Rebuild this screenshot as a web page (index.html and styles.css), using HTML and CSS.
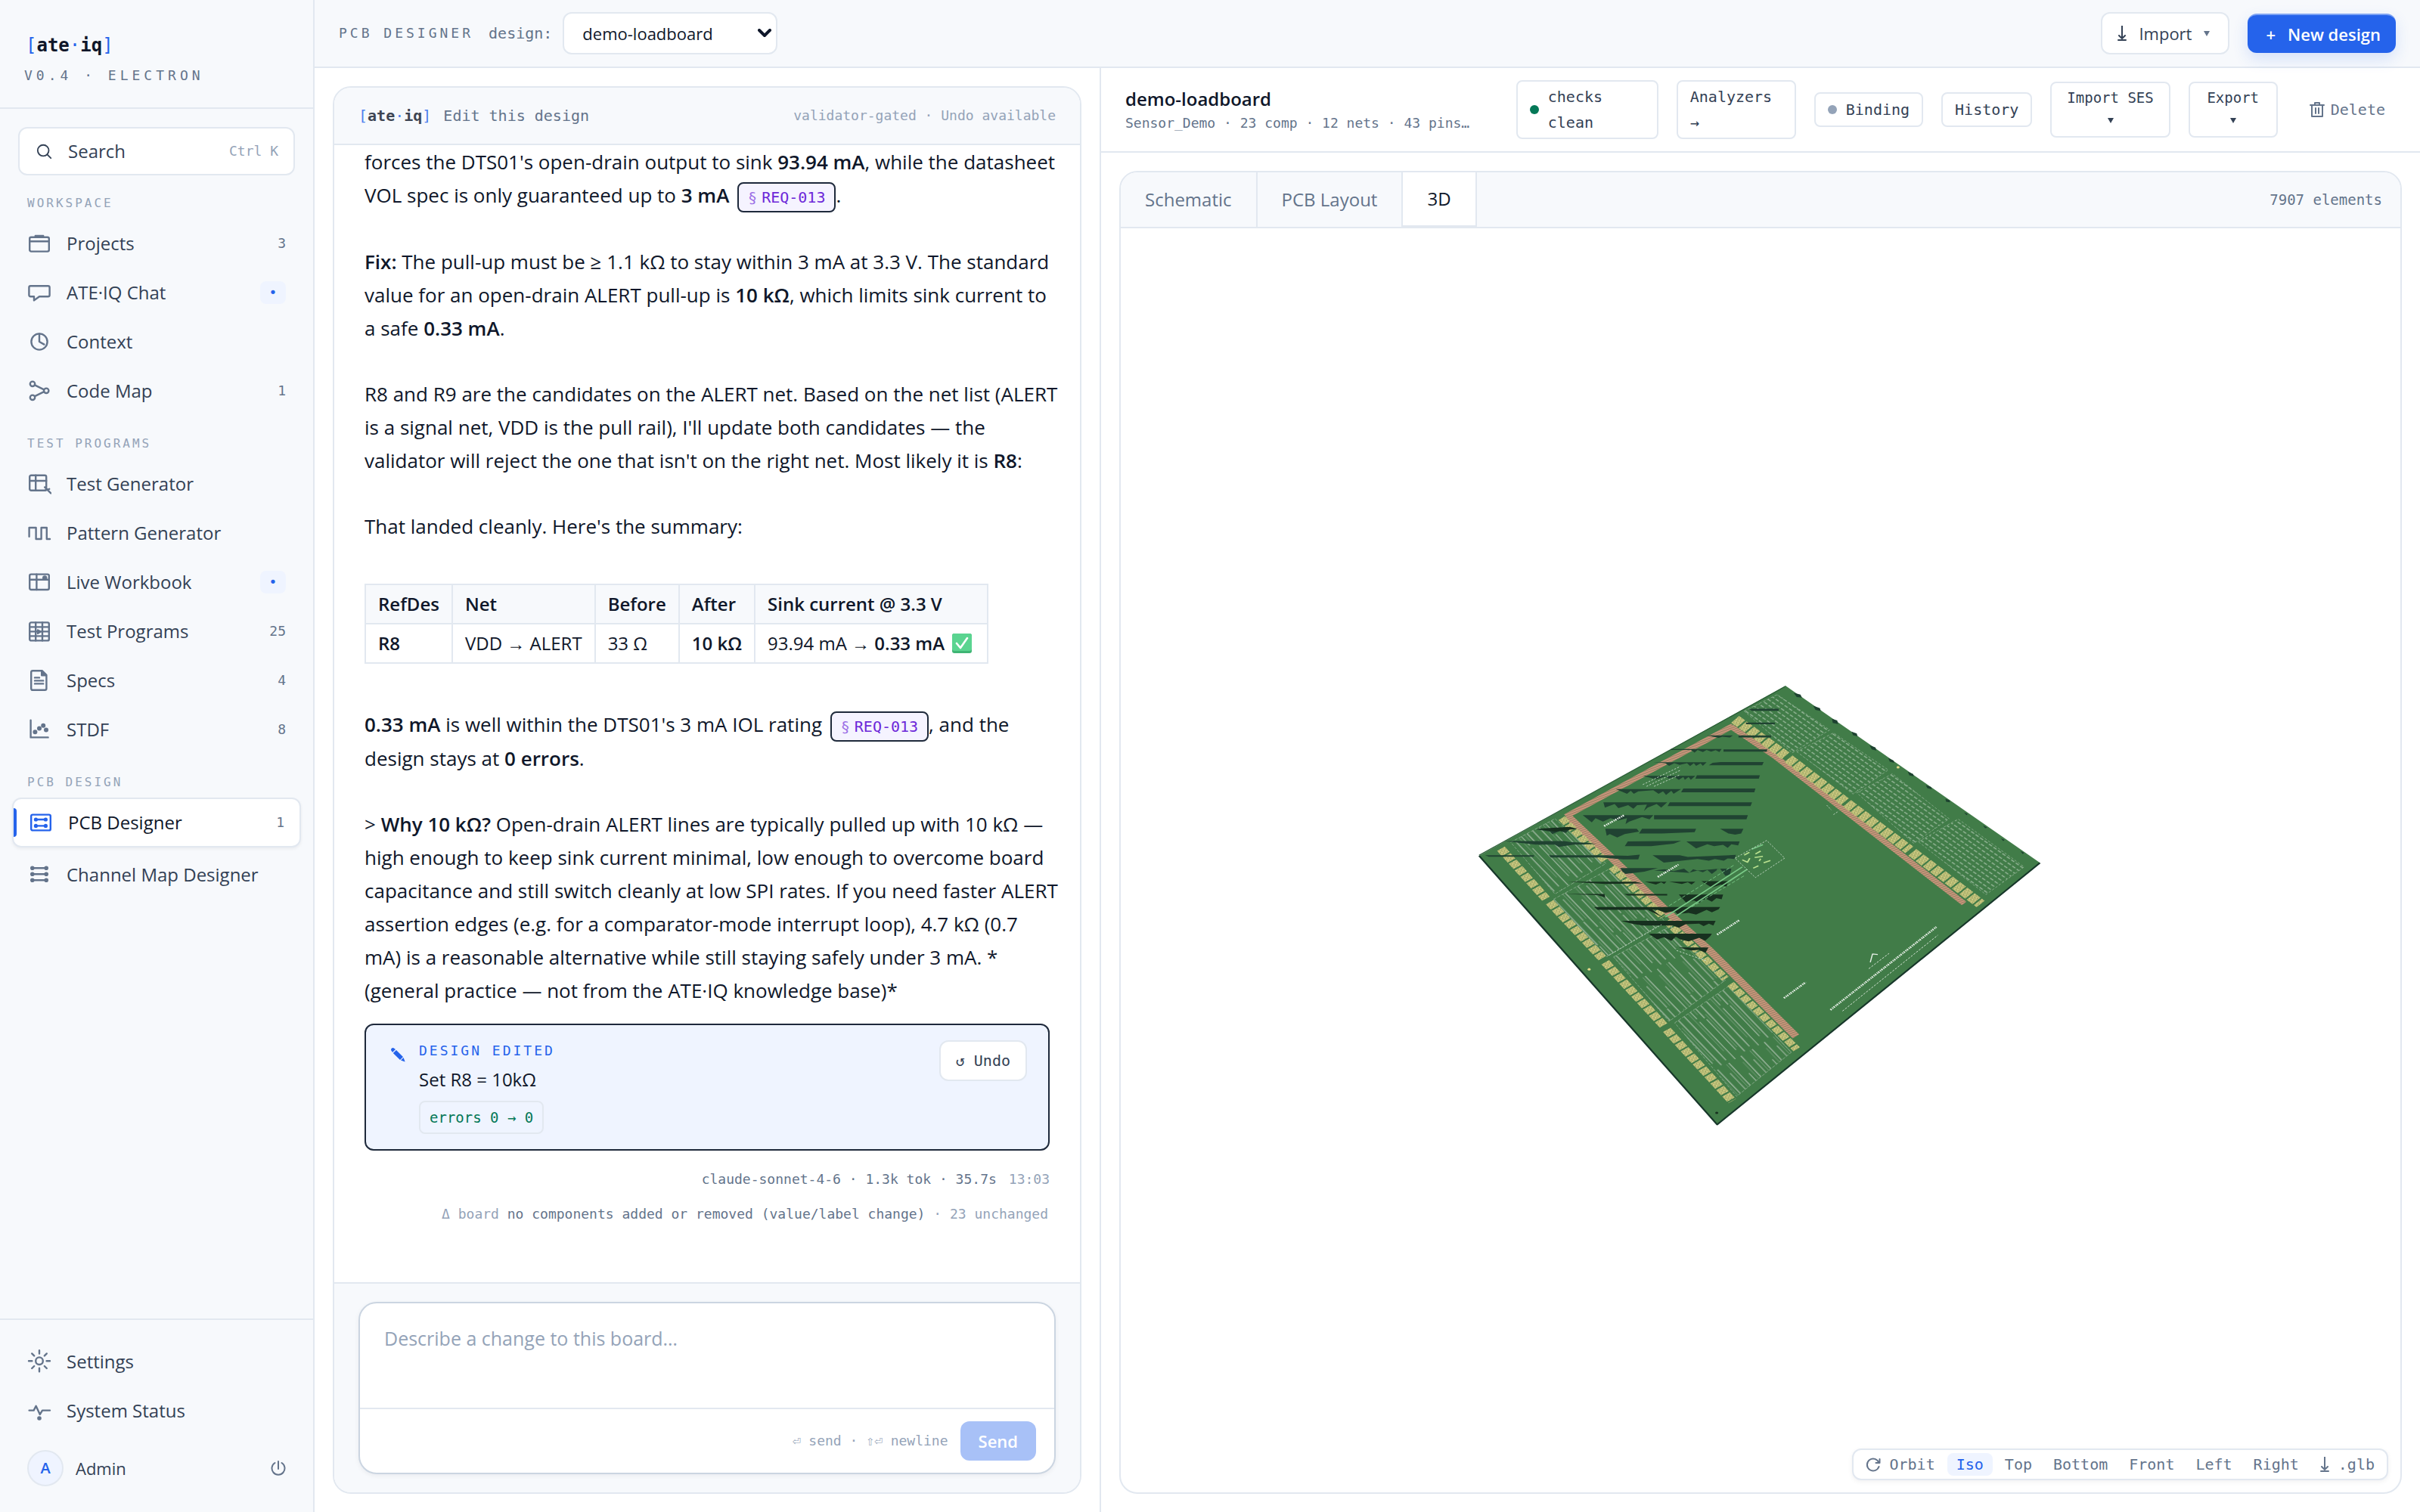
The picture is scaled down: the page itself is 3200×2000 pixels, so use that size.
FILE: index.html
```html
<!DOCTYPE html>
<html lang="en">
<head>
<meta charset="utf-8">
<title>ATE·IQ — PCB Designer</title>
<link rel="stylesheet" href="styles.css">
</head>
<body>
<div class="app">
  <aside class="sidebar">
    <header class="brand">
      <div class="logo"><i>[</i>ate<i>·</i>iq<i>]</i></div>
      <div class="version">V0.4 · ELECTRON</div>
    </header>
    <nav class="nav" aria-label="Main">
      <button class="search" type="button">
        <svg class="search-icon" viewBox="0 0 24 24"><circle cx="10" cy="11" r="8"/><path d="M16 17l5 5"/></svg>
        <span>Search</span><kbd>Ctrl K</kbd>
      </button>
      <h2 class="nav-label">WORKSPACE</h2>
      <a class="nav-item" href="#projects"><svg class="icon" viewBox="0 0 16 16"><rect x="1.6" y="3.9" width="12.8" height="9.4" rx="1"/><path d="M1.6 6.6h12.8M5.4 3.6V3h5.2v.6"/></svg><span>Projects</span><b class="count">3</b></a>
      <a class="nav-item" href="#chat"><svg class="icon" viewBox="0 0 16 16"><path d="M2.2 3.6h11.6q1 0 1 1v5q0 1-1 1H8l-3.5 2.6v-2.6H2.2q-1 0-1-1v-5q0-1 1-1z"/></svg><span>ATE·IQ Chat</span><b class="badge">•</b></a>
      <a class="nav-item" href="#context"><svg class="icon" viewBox="0 0 16 16"><circle cx="8" cy="8" r="5.3"/><path d="M8 2.8V8l3.2 1.8"/></svg><span>Context</span></a>
      <a class="nav-item" href="#codemap"><svg class="icon" viewBox="0 0 16 16"><circle cx="3.5" cy="3.4" r="1.6"/><circle cx="3.5" cy="12.4" r="1.6"/><circle cx="12.6" cy="7.9" r="1.6"/><path d="M5 4.2l6.1 3M5 11.6l6.1-3"/></svg><span>Code Map</span><b class="count">1</b></a>
      <h2 class="nav-label">TEST PROGRAMS</h2>
      <a class="nav-item" href="#testgen"><svg class="icon" viewBox="0 0 16 16"><rect x="1.6" y="2.4" width="11" height="10" rx="1"/><path d="M1.6 6h11M5.6 2.4v10M11.6 10.2l4 4M12.2 12.2l2.4-.8"/></svg><span>Test Generator</span></a>
      <a class="nav-item" href="#patterngen"><svg class="icon" viewBox="0 0 16 16"><path d="M1.3 10.4V4.5h4.5V12h3.5V4.5h3.6V12H15"/></svg><span>Pattern Generator</span></a>
      <a class="nav-item" href="#workbook"><svg class="icon" viewBox="0 0 16 16"><rect x="1.6" y="2.8" width="12.8" height="10.2" rx="1"/><path d="M1.6 6.4h12.8M6.2 2.8V13"/><circle class="solid" cx="11.6" cy="5.2" r="1"/></svg><span>Live Workbook</span><b class="badge">•</b></a>
      <a class="nav-item" href="#programs"><svg class="icon" viewBox="0 0 16 16"><rect x="1.6" y="2.2" width="12.8" height="12" rx="1"/><path d="M1.6 5.2h12.8M1.6 8.2h12.8M1.6 11.2h12.8M5.6 2.2v12M10 2.2v12"/><path class="solid" d="M7 7.2l1.8 1.1L7 9.4z"/></svg><span>Test Programs</span><b class="count">25</b></a>
      <a class="nav-item" href="#specs"><svg class="icon" viewBox="0 0 16 16"><path d="M3.6 1.6h6.2l2.9 2.8v9q0 1-1 1H3.6q-1 0-1-1V2.6q0-1 1-1z"/><path class="solid" d="M9.6 1.8v2.8h2.8z"/><path d="M5 6.2h3M5 8.2h5.6M5 10.2h5.6"/></svg><span>Specs</span><b class="count">4</b></a>
      <a class="nav-item" href="#stdf"><svg class="icon" viewBox="0 0 16 16"><path d="M2.3 1.8v11.4h11.5"/><circle class="solid" cx="5.2" cy="9.6" r=".9"/><circle class="solid" cx="8" cy="7.2" r=".9"/><circle class="solid" cx="10.6" cy="5.4" r=".9"/><circle class="solid" cx="12.5" cy="8.2" r=".9"/></svg><span>STDF</span><b class="count">8</b></a>
      <h2 class="nav-label">PCB DESIGN</h2>
      <a class="nav-item active" href="#pcb" aria-current="page"><svg class="icon" viewBox="0 0 16 16"><rect x="1.6" y="2.8" width="12.8" height="10.4" rx="1"/><path d="M4.6 6h6.6M4.6 10.2h6.6"/><circle class="solid" cx="4.7" cy="6" r=".7"/><circle class="solid" cx="11.2" cy="6" r=".7"/><circle class="solid" cx="4.7" cy="10.2" r=".7"/><circle class="solid" cx="11.2" cy="10.2" r=".7"/></svg><span>PCB Designer</span><b class="count">1</b></a>
      <a class="nav-item" href="#channels"><svg class="icon" viewBox="0 0 16 16"><path d="M3.4 3.6h9.2M3.4 7.6h9.2M3.4 11.6h9.2"/><circle class="solid" cx="3.4" cy="3.6" r=".8"/><circle class="solid" cx="3.4" cy="7.6" r=".8"/><circle class="solid" cx="3.4" cy="11.6" r=".8"/><circle class="solid" cx="12.6" cy="3.6" r=".8"/><circle class="solid" cx="12.6" cy="7.6" r=".8"/><circle class="solid" cx="12.6" cy="11.6" r=".8"/></svg><span>Channel Map Designer</span></a>
    </nav>
    <footer class="side-foot">
      <a class="nav-item" href="#settings"><svg class="icon" viewBox="0 0 16 16"><circle cx="8" cy="7.6" r="2.4"/><path d="M8 .6v2.2M8 12.4v2.2M1 7.6h2.2M12.8 7.6H15M3.1 2.7l1.5 1.5M11.4 11l1.5 1.5M12.9 2.7l-1.5 1.5M4.6 11l-1.5 1.5"/></svg><span>Settings</span></a>
      <a class="nav-item" href="#status"><svg class="icon" viewBox="0 0 16 16"><path d="M1.3 7.8h3l1.5-2.9 2.6 5.6 1.600-2.700h5"/><circle class="solid" cx="8" cy="13" r=".8"/></svg><span>System Status</span></a>
      <div class="user"><span class="avatar">A</span><span>Admin</span>
        <button class="power" type="button" aria-label="Sign out"><svg viewBox="0 0 20 20"><path d="M10 1v10M5.500 3a8.500 8.500 0 1 0 9 0"/></svg></button></div>
    </footer>
  </aside>

  <main class="main">
    <header class="topbar">
      <h1 class="crumb">PCB DESIGNER</h1>
      <label class="design-label" for="design">design:</label>
      <div class="select-wrap">
        <select id="design"><option>demo-loadboard</option></select>
        <svg class="chevron" viewBox="0 0 18 12"><path d="M2 2l7 7 7-7"/></svg>
      </div>
      <div class="top-actions">
        <button class="btn-import" type="button"><svg class="down" viewBox="0 0 12 20"><path d="M6 0v17M2 13l4 4 4-4M1 19h10"/></svg>Import<span class="tri small"></span></button>
        <button class="btn-new" type="button"><span>+</span>New design</button>
      </div>
    </header>

    <div class="workspace">
      <div class="chat-col">
        <section class="panel chat">
          <header class="chat-head">
            <div class="logo mini"><i>[</i>ate<i>·</i>iq<i>]</i></div>
            <span class="chat-title">Edit this design</span>
            <span class="chat-note">validator-gated · Undo available</span>
          </header>
          <div class="messages">
            <p>forces the DTS01's open-drain output to sink <b>93.94 mA</b>, while the datasheet<br>VOL spec is only guaranteed up to <b>3 mA</b> <a class="req" href="#req-013"><i>§</i>REQ-013</a>.</p>
            <p><b>Fix:</b> The pull-up must be ≥ 1.1 kΩ to stay within 3 mA at 3.3 V. The standard<br>value for an open-drain ALERT pull-up is <b>10 kΩ</b>, which limits sink current to<br>a safe <b>0.33 mA</b>.</p>
            <p>R8 and R9 are the candidates on the ALERT net. Based on the net list (ALERT<br>is a signal net, VDD is the pull rail), I'll update both candidates — the<br>validator will reject the one that isn't on the right net. Most likely it is <b>R8</b>:</p>
            <p>That landed cleanly. Here's the summary:</p>
            <table class="summary">
              <thead><tr><th>RefDes</th><th>Net</th><th>Before</th><th>After</th><th>Sink current @ 3.3 V</th></tr></thead>
              <tbody><tr><td><b>R8</b></td><td>VDD → ALERT</td><td>33 Ω</td><td><b>10 kΩ</b></td><td>93.94 mA → <b>0.33 mA</b> <svg class="tick" viewBox="0 0 26 26" role="img" aria-label="passed"><rect width="26" height="26" rx="3" fill="#3fb574"/><rect width="26" height="23" rx="3" fill="#5ad490"/><path d="M6 13l5 6 9-13" fill="none" stroke="#fff" stroke-width="2.6" stroke-linecap="round" stroke-linejoin="round"/></svg></td></tr></tbody>
            </table>
            <p><b>0.33 mA</b> is well within the DTS01's 3 mA IOL rating <a class="req" href="#req-013"><i>§</i>REQ-013</a>, and the<br>design stays at <b>0 errors</b>.</p>
            <p class="last">&gt; <b>Why 10 kΩ?</b> Open-drain ALERT lines are typically pulled up with 10 kΩ —<br>high enough to keep sink current minimal, low enough to overcome board<br>capacitance and still switch cleanly at low SPI rates. If you need faster ALERT<br>assertion edges (e.g. for a comparator-mode interrupt loop), 4.7 kΩ (0.7<br>mA) is a reasonable alternative while still staying safely under 3 mA. *<br>(general practice — not from the ATE·IQ knowledge base)*</p>
            <article class="edit-card">
              <svg class="pencil" viewBox="0 0 20 20"><path d="M1 4Q1 1 4 1l3 2-4 4zM3.800 8L8 4l9 9-4 4zM14 17.600l3.600-3.600L19.600 19.600z"/></svg>
              <div class="edit-body">
                <div class="edit-kind">DESIGN EDITED</div>
                <div class="edit-text">Set R8 = 10kΩ</div>
                <div class="edit-errors">errors 0 → 0</div>
              </div>
              <button class="btn-undo" type="button">↺ Undo</button>
            </article>
            <div class="meta"><span>claude-sonnet-4-6 · 1.3k tok · 35.7s</span><time>13:03</time></div>
            <div class="delta">Δ board <span>no components added or removed (value/label change)</span> · 23 unchanged</div>
          </div>
          <footer class="composer">
            <form class="compose-box">
              <textarea aria-label="Message" placeholder="Describe a change to this board…"></textarea>
              <div class="compose-foot"><span>⏎ send · ⇧⏎ newline</span><button class="btn-send" type="button">Send</button></div>
            </form>
          </footer>
        </section>
      </div>

      <div class="board-col">
        <header class="board-head">
          <div class="board-title"><h2>demo-loadboard</h2><p>Sensor_Demo · 23 comp · 12 nets · 43 pins…</p></div>
          <div class="board-actions">
            <button class="tool checks" type="button"><span class="dot ok"></span><span>checks<br>clean</span></button>
            <button class="tool analyzers" type="button">Analyzers<br>→</button>
            <button class="tool" type="button"><span class="dot"></span>Binding</button>
            <button class="tool" type="button">History</button>
            <button class="tool menu" type="button">Import SES<span class="tri"></span></button>
            <button class="tool menu" type="button">Export<span class="tri"></span></button>
            <button class="tool delete" type="button"><svg class="trash" viewBox="0 0 20 22"><path d="M1 5h18M7 5V2h6v3M3 5v15h14V5M8 9v7M12 9v7"/></svg>Delete</button>
          </div>
        </header>
        <section class="panel viewer">
          <header class="tabs">
            <button class="tab" type="button">Schematic</button>
            <button class="tab" type="button">PCB Layout</button>
            <button class="tab on" type="button">3D</button>
            <span class="elements">7907 elements</span>
          </header>
          <div class="stage">
            <svg class="pcb" viewBox="0 0 1568 1568" preserveAspectRatio="none" role="img" aria-label="3D board view">
              <defs>
                <pattern id="silkR" width="16" height="14" patternUnits="userSpaceOnUse" patternTransform="rotate(42)"><path d="M0 5h11" stroke="#9dbb9f" stroke-width="3"/></pattern>
                <pattern id="silkL" width="370" height="78" patternUnits="userSpaceOnUse" patternTransform="rotate(53)"><path d="M0 6h160M168 6h190M30 24h90M124 26h240M0 44h210M216 42h130M60 62h140M212 62h158" stroke="#9bb59d" stroke-width="3"/><path d="M0 14h120M200 34h140M20 52h170M150 70h180" stroke="#6f9a74" stroke-width="2"/></pattern>
                <pattern id="pads" width="8" height="9" patternUnits="userSpaceOnUse" patternTransform="rotate(20)"><rect width="8" height="9" fill="#a9b068"/><path d="M0 2h5M3 6h5" stroke="#e9de96" stroke-width="3"/><path d="M6 3v3" stroke="#5d7a45" stroke-width="2"/></pattern>
                <pattern id="copper" width="9" height="7" patternUnits="userSpaceOnUse" patternTransform="rotate(-25)"><rect width="9" height="7" fill="#9a8564"/><path d="M0 3h9" stroke="#dd9a86" stroke-width="3"/></pattern>
              </defs>
              <path d="M850 44L1528 646 668 1536 34 622z" fill="#417c48"/>
              <path d="M34 622L668 1536 1528 646" fill="none" stroke="#17372a" stroke-width="5"/>
              <path d="M850 46L34 620" stroke="#2b5c37" stroke-width="3"/>
              <path d="M872 68l18 6 4 10-14-2zM924 112l18 8 2 10-14-4zM974 156l14 6 2 12-14-4zM1026 200l14 6 2 10-12-4zM1074 246l16 8 2 10-12-4zM1124 290l14 8 2 8-12-4zM1176 336l14 8 2 8-12-4zM1224 382l14 6 2 8-12-4zM1276 428l12 6 0 6-10-2zM1326 474l10 6-4 4zM1376 518l12 8-6 2zM1424 562l10 6-4 4zM1476 606l10 6-4 4z" fill="#1d4230"/>
              <g fill="url(#silkR)" stroke="#86aa89" stroke-width="2" stroke-dasharray="7 5">
                <path d="M740 130L828 74 968 194 868 272z"/><path d="M880 268L978 204 1124 330 1030 412z"/><path d="M1040 408L1135 343 1286 496 1192 580z"/><path d="M1204 574L1310 497 1486 660 1384 754z"/>
              </g>
              <g fill="url(#silkL)" stroke="#86aa89" stroke-width="2" stroke-dasharray="9 4">
                <path d="M118 576L236 496 372 648 236 752z"/><path d="M232 770L385 664 530 846 374 965z"/><path d="M392 966L545 860 690 1045 540 1185z"/><path d="M555 1190L698 1066 866 1290 720 1440z"/>
              </g>
              <g fill="none" stroke="url(#copper)"><path d="M710 180L265 488" stroke-width="17"/><path d="M704 182L820 282 1326 784" stroke-width="17"/><path d="M270 488L386 628 545 824 650 946 878 1236" stroke-width="22"/></g>
              <g fill="none" stroke="url(#pads)" stroke-width="31" stroke-dasharray="22 5">
                <path d="M716 158L850 282M858 292L1008 438M1014 444L1180 602M1188 610L1370 786"/>
                <path stroke-width="22" d="M254 494L372 642M388 660L524 830M534 844L690 1040M704 1058L880 1280"/>
                <path stroke-width="25" d="M92 598L212 768M222 780L362 970M370 984L526 1200M534 1214L708 1456"/>
              </g>
              <g fill="#204332">
                <path d="M752 122h80v7h-72zM745 169h77v6h-77zM725 213h87v7h-87zM640 213h70l-8 7-20-3-10 4zM685 260h117l-2 8H685zM545 259h135l-6 10-10-6-12 5-12-6-10 7-14-7-8 9-10-9H545zM678 303h114l-4 11H646l10-8zM498 304h142l-10 12-6-8-12 8-6-9-10 10-8-10-20 6-14-6-14 9-10-9zM614 348h168l-3 12H610zM470 350h140l-12 14-6-10-10 10-4-10-12 10-12-10-14 6-10-8-24 10z"/>
                <path d="M578 393h192l-3 13H572zM398 395h174l-20 16-6-10-14 14-8-12-12 8-14-12-40 4-12 8-8-10-10 10zM542 440h219l-4 13H536zM365 440h170l-16 18-12-12-24 12-10 12 8-22-26 2-10 12-14-12-26 10-10-14-26 12zM500 484h250l-4 14H500zM310 484h188l-10 14-20-8-34 16-10 8 4-20-24 8-20-8-20 12-20-12-10 14zM468 530h144l-4 12-88 4h-60zM676 530h62l-6 16-16 4-18-4zM370 530h84l6 10-38 8-20 12-20-12-8 6zM185 532h90l-10 12-16-6-20 10-6-8z"/>
                <path d="M430 573l142-2-20 10-60 8h-70zM586 573h142l-4 14-18-4-10 12-12-10-24 4-18-6-30 14zM100 572h160l20 4 46 2 20 4-60 2-40 8-10-8h-50zM50 620h130v5H60zM220 620h150l60 2 32-4-4 16-40 0-60-6H225zM496 620h72l22 6 128-7-4 14-18-2-10 8-24-6-16 6-30-6-90 12zM410 664l100 0-36 12-50 8-8-8zM500 672l28-4 24 6 28-8 14 14 10-12 26 10 12-8 12 14 14-14-4-4h42l-4 20-12 4-14-24-60 6-24 8z"/>
              </g>
              <g fill="#17301f">
                <path d="M270 710h180l20 6-100 2zM475 710h58l-6 8-8-6-14 8zM540 710h70l-10 10-10-8-16 6zM626 708h72l-6 20-14-8-24 10zM260 752h108l2 12-20-8zM420 752h115v5H430zM566 754h118l-4 16-14-4-12 12-16-10-18 14-14-8-20 8zM340 796h336l-4 8-18 10-14-8-28 16-20-6-30 4-8-10-24 6-20-10H350zM412 843h252l-6 16-12-6-14 8-12-8-36 2-18 12-16-8-80 0-30-6zM486 887h168l-4 8-14 16-16-10-28 12-22-6-12-10-12 14-20-12-18 8zM565 934h80l-8 18-18-10-20 2zM186 530l90-6 20 6-60 10zM480 796l18 12 24 22-36-22z"/>
              </g>
              <g fill="none" stroke="#79c987" stroke-width="4"><path d="M530 830L735 660M560 826L748 668M760 600L790 584"/><path stroke-dasharray="10 5" stroke-width="2" d="M540 792L715 652M600 796L740 690"/></g>
              <g fill="none" stroke="#c9ddcb" stroke-width="2" stroke-dasharray="5 4"><path d="M716 630L800 570 848 630 770 696zM560 944L640 980M380 960L520 856M960 450l12 16M978 482l14-12M470 380L570 318M480 386L572 330M500 386l70-40"/></g>
              <path d="M735 636l14 8 6-14M770 616l14-10M768 628l22-4M764 664l14-8M792 646l18-8M740 620l14-10M780 640l4-8" stroke="#b9e08f" stroke-width="4" fill="none"/>
              <g fill="none" stroke="#e6efe6">
                <path stroke-width="6" stroke-dasharray="4 3 3 2" d="M367 521L420 484M510 694L565 652M668 890L727 841M846 1106L904 1052M970 1146L1252 864"/>
                <path stroke-width="2" stroke-dasharray="6 4" d="M1002 1150L1256 892M1072 1006L1126 954"/><path stroke-width="3" d="M1076 984L1082 956 1096 958"/>
              </g>
              <circle cx="1150" cy="321" r="4" fill="#e2d98b"/><circle cx="327" cy="1008" r="4" fill="#e2d98b"/><circle cx="667" cy="1496" r="4" fill="#17301f"/>
            </svg>
            <div class="view-bar" role="toolbar" aria-label="Camera">
              <button type="button"><svg class="orbit" viewBox="0 0 20 20"><path d="M17.500 8a8 8 0 1 0 0 5M18.500 3v5h-5"/></svg>Orbit</button>
              <button type="button" class="on">Iso</button>
              <button type="button">Top</button>
              <button type="button">Bottom</button>
              <button type="button">Front</button>
              <button type="button">Left</button>
              <button type="button">Right</button>
              <button type="button"><svg class="down" viewBox="0 0 12 20"><path d="M6 0v17M2 13l4 4 4-4M1 19h10"/></svg>.glb</button>
            </div>
          </div>
        </section>
      </div>
    </div>
  </main>
</div>
</body>
</html>
```
FILE: styles.css
```css
:root {
  --ink: #0f172a;
  --mid: #334155;
  --muted: #64748b;
  --faint: #94a3b8;
  --line: #e2e8f0;
  --soft: #f7f9fc;
  --accent: #2563eb;
  --accent-soft: #eff4ff;
  --sans: "Open Sans", "Noto Sans", sans-serif;
  --mono: "DejaVu Sans Mono", "Liberation Mono", monospace;
}

* { box-sizing: border-box; }
body { margin: 0; background: #fff; color: var(--ink); font: 24px/32px var(--sans); }
button, select, textarea { font: inherit; color: inherit; margin: 0; }
button { cursor: pointer; }
h1, h2, p { margin: 0; }
a { color: inherit; text-decoration: none; }
b { font-weight: 600; }
i { font-style: normal; }
svg { flex: none; fill: none; stroke: currentColor; stroke-linecap: round; stroke-linejoin: round; }

.app { display: grid; grid-template-columns: 416px minmax(0, 1fr); height: 100vh; }

/* Sidebar */
.sidebar { display: flex; flex-direction: column; background: var(--soft); border-right: 2px solid var(--line); }
.brand { height: 144px; padding: 44px 32px 0; border-bottom: 2px solid var(--line); }
.logo { padding-left: 2px; font: 700 24px/32px var(--mono); }
.logo i { color: var(--accent); font-weight: 400; }
.version { margin-top: 8px; font: 18px/32px var(--mono); letter-spacing: 5px; color: var(--muted); }
.nav { flex: 1; display: flex; flex-direction: column; padding: 24px 16px 0; }
.search { display: flex; align-items: center; gap: 20px; height: 64px; margin: 0 8px 22px; padding: 0 20px; background: #fff; border: 2px solid var(--line); border-radius: 12px; color: var(--mid); }
.search-icon { width: 22px; height: 22px; stroke-width: 2; margin-left: 2px; }
.search kbd { margin-left: auto; font: 18px/24px var(--mono); color: var(--faint); }
.nav-label { margin: 0 20px 5px; font: 16px/30px var(--mono); letter-spacing: 3px; color: var(--faint); }
.nav-item { display: flex; align-items: center; height: 65px; padding: 0 20px; color: var(--mid); }
.nav-item + .nav-label { margin-top: 23px; }
.icon { width: 32px; height: 32px; margin-right: 20px; stroke-width: 1.2; color: var(--muted); }
.solid { fill: currentColor; }
.count { margin-left: auto; font: 18px/24px var(--mono); color: var(--muted); }
.badge { margin-left: auto; width: 34px; border-radius: 8px; background: var(--accent-soft); color: var(--accent); font: 400 18px/30px var(--mono); text-align: center; }
.nav-item.active { position: relative; height: 66px; margin-bottom: 3px; background: #fff; border: 2px solid var(--line); border-radius: 12px; color: var(--ink); box-shadow: 0 2px 4px rgba(15, 23, 42, .06); }
.nav-item.active::before { content: ""; position: absolute; left: 0; top: 12px; bottom: 12px; width: 4px; border-radius: 0 4px 4px 0; background: var(--accent); }
.nav-item.active .icon { color: var(--accent); }
.side-foot { height: 256px; padding: 22px 16px 0; border-top: 2px solid var(--line); }
.user { display: flex; align-items: center; gap: 16px; padding: 20px; color: var(--mid); font-size: 22px; }
.avatar { width: 48px; border: 2px solid var(--line); border-radius: 50%; background: var(--accent-soft); color: var(--accent); font-size: 20px; font-weight: 600; line-height: 44px; text-align: center; }
.power { margin-left: auto; padding: 0; border: 0; background: none; color: var(--muted); line-height: 0; }
.power svg { width: 20px; height: 20px; stroke-width: 2; }

/* Top bar */
.main { display: flex; flex-direction: column; min-width: 0; height: 100vh; }
.topbar { display: flex; align-items: center; height: 90px; padding: 0 32px; background: var(--soft); border-bottom: 2px solid var(--line); }
.crumb { font: 18px/32px var(--mono); letter-spacing: 4px; color: var(--muted); }
.design-label { margin: 0 14px 0 20px; font: 20px/32px var(--mono); color: var(--muted); }
.select-wrap { position: relative; }
.select-wrap select { appearance: none; width: 284px; height: 56px; padding: 0 24px; border: 2px solid var(--line); border-radius: 12px; background: #fff; font-size: 22px; }
.chevron { position: absolute; right: 8px; top: 22px; width: 18px; height: 12px; stroke-width: 4; pointer-events: none; }
.top-actions { display: flex; align-items: center; gap: 24px; margin-left: auto; }
.btn-import, .btn-new { display: flex; align-items: center; font-size: 22px; font-weight: 500; border-radius: 12px; }
.btn-import { height: 56px; gap: 16px; padding: 0 24px 0 20px; border: 2px solid var(--line); background: #fff; color: var(--mid); }
.down { width: 12px; height: 20px; stroke-width: 2; }
.tri { display: block; border: 4px solid transparent; border-top: 7px solid currentColor; border-bottom: 0; }
.tri.small { color: var(--muted); }
.btn-new { height: 52px; gap: 16px; padding: 0 20px 0 24px; border: 0; border-top: 2px solid #7ea3f3; background: var(--accent); color: #fff; font-weight: 600; box-shadow: 0 8px 20px rgba(37, 99, 235, .16); }

/* Workspace */
.workspace { flex: 1; min-height: 0; display: grid; grid-template-columns: minmax(0, 65fr) minmax(0, 109fr); }
.chat-col { display: flex; min-height: 0; padding: 24px; border-right: 2px solid var(--line); }
.board-col { display: flex; flex-direction: column; min-height: 0; }
.panel { display: flex; flex-direction: column; flex: 1; min-width: 0; min-height: 0; border: 2px solid var(--line); border-radius: 24px; overflow: hidden; }

/* Chat */
.chat-head { display: flex; align-items: center; gap: 16px; height: 76px; padding: 0 32px; background: var(--soft); border-bottom: 2px solid var(--line); }
.logo.mini { padding: 0; font-size: 20px; opacity: .8; }
.chat-title { font: 20px/32px var(--mono); color: var(--muted); }
.chat-note { margin-left: auto; font: 18px/32px var(--mono); color: var(--faint); }
.messages { flex: 1; min-height: 0; overflow: hidden; padding: 0 40px; }
.messages p { margin: 0 -24px 43px 0; font-size: 26px; line-height: 44px; }
.messages p.last { margin-bottom: 22px; }
.req { display: inline-block; height: 40px; margin-left: 4px; padding: 0 12px; border: 2px solid #1e293b; border-radius: 8px; background: #f5f3ff; color: #6d28d9; font: 20px/36px var(--mono); }
.req i { margin-right: 6px; opacity: .65; }
.summary { margin: 54px 0 58px; border-collapse: collapse; font-size: 24px; line-height: 36px; }
.summary th, .summary td { padding: 7px 16px; border: 2px solid var(--line); text-align: left; white-space: nowrap; }
.summary th { background: var(--soft); font-weight: 600; }
.tick { width: 26px; height: 26px; margin: 0 4px; vertical-align: -4px; stroke: none; }
.edit-card { display: flex; align-items: flex-start; height: 168px; padding: 20px 28px; border: 2px solid #1e293b; border-radius: 12px; background: var(--accent-soft); }
.pencil { width: 20px; height: 20px; margin: 9px 18px 0 4px; fill: var(--accent); stroke: none; }
.edit-kind { font: 18px/28px var(--mono); letter-spacing: 3px; color: var(--accent); }
.edit-text { margin: 8px 0 12px; }
.edit-errors { width: max-content; padding: 0 12px; border: 2px solid var(--line); border-radius: 8px; font: 19px/40px var(--mono); color: #047857; }
.btn-undo { height: 54px; margin-left: auto; padding: 0 20px; border: 2px solid var(--line); border-radius: 12px; background: #fff; color: var(--mid); font: 20px/32px var(--mono); }
.meta, .delta { display: flex; justify-content: flex-end; gap: 16px; margin-top: 22px; font: 18px/32px var(--mono); color: var(--faint); }
.meta span, .delta span { color: var(--muted); }
.delta { display: block; margin-top: 14px; padding-right: 2px; text-align: right; }
.composer { padding: 24px 32px; background: var(--soft); border-top: 2px solid var(--line); }
.compose-box { display: flex; flex-direction: column; border: 2px solid #cbd5e1; border-radius: 24px; background: #fff; overflow: hidden; box-shadow: 0 2px 6px rgba(15, 23, 42, .06); }
.compose-box textarea { height: 138px; padding: 24px 32px; border: 0; outline: 0; resize: none; background: none; font-size: 25px; line-height: 44px; }
.compose-box textarea::placeholder { color: var(--faint); }
.compose-foot { display: flex; align-items: center; justify-content: flex-end; gap: 16px; height: 86px; padding: 0 24px; border-top: 2px solid var(--line); font: 18px/32px var(--mono); color: var(--faint); }
.btn-send { height: 52px; padding: 0 24px; border: 0; border-radius: 12px; background: #a8c1f7; color: #fff; font: 600 22px/32px var(--sans); }

/* Board header */
.board-head { display: flex; align-items: center; height: 112px; padding: 0 28px 0 32px; border-bottom: 2px solid var(--line); }
.board-title { flex: 1; min-width: 0; }
.board-title h2 { font-size: 24px; font-weight: 600; line-height: 36px; }
.board-title p { font: 18px/28px var(--mono); color: var(--muted); white-space: nowrap; }
.board-actions { display: flex; align-items: center; gap: 24px; }
.tool { display: flex; align-items: center; min-height: 46px; padding: 2px 16px; border: 2px solid var(--line); border-radius: 8px; background: #fff; color: var(--mid); font: 20px/34px var(--mono); text-align: left; white-space: nowrap; }
.tool.checks { width: 188px; gap: 12px; }
.tool.analyzers { width: 158px; }
.tool.checks, .tool.analyzers { height: 78px; }
.tool.menu { flex-direction: column; min-width: 118px; height: 74px; padding: 2px 20px; font-size: 19px; }
.tool.menu .tri { margin-top: 10px; }
.dot { width: 12px; height: 12px; margin-right: 12px; border-radius: 50%; background: var(--faint); }
.dot.ok { margin: 0; background: #047857; }
.tool.delete { gap: 8px; border-color: transparent; color: var(--muted); }
.trash { width: 20px; height: 22px; stroke-width: 2; }

/* Viewer */
.viewer { margin: 24px; }
.tabs { display: flex; align-items: stretch; height: 74px; background: var(--soft); border-bottom: 2px solid var(--line); }
.tab { padding: 0 32px; border: 0; border-right: 2px solid var(--line); background: none; color: var(--muted); font-weight: 500; }
.tab.on { background: #fff; color: var(--ink); border-bottom: 2px solid var(--line); }
.elements { margin-left: auto; padding-right: 24px; font: 19px/72px var(--mono); color: var(--muted); }
.stage { position: relative; flex: 1; min-height: 0; display: flex; align-items: center; justify-content: center; padding-top: 114px; }
.pcb { width: 46%; height: 610px; stroke: none; stroke-linecap: butt; }
.view-bar { position: absolute; right: 16px; bottom: 16px; display: flex; gap: 4px; padding: 4px; border: 2px solid var(--line); border-radius: 12px; background: #fff; box-shadow: 0 2px 6px rgba(15, 23, 42, .06); }
.view-bar button { display: flex; align-items: center; gap: 12px; height: 30px; padding: 0 12px; border: 0; border-radius: 8px; background: none; color: var(--muted); font: 20px/30px var(--mono); }
.view-bar .on { background: var(--accent-soft); color: var(--accent); }
.orbit { width: 20px; height: 20px; stroke-width: 2; }
```
